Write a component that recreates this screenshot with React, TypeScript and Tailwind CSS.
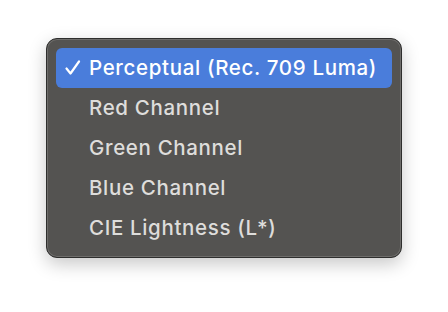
import React from "react";

const items = [
  "Perceptual (Rec. 709 Luma)",
  "Red Channel",
  "Green Channel",
  "Blue Channel",
  "CIE Lightness (L*)",
];

export default function App() {
  return (
    <div className="w-[448px] h-[312px] bg-white pl-[46px] pt-[38px]" style={{ fontFamily: "Inter, 'Noto Sans', sans-serif" }}>
      <div className="w-[356px] h-[220px] rounded-[11px] bg-[#545351] border border-[#2e2e2d] shadow-[0_6px_18px_rgba(0,0,0,0.22),inset_0_0_0_1px_#6e6d6b] p-[9px] flex flex-col">
        {items.map((t, i) => (
          <div
            key={t}
            className={
              i === 0
                ? "h-[40px] rounded-[6px] bg-[#4a7ddb] text-white flex items-center text-[20.5px] font-medium tracking-[0.65px]"
                : "h-[40px] rounded-[6px] text-[#dedddb] flex items-center text-[20.5px] font-medium tracking-[0.65px]"
            }
          >
            <div className="w-[33px] pl-[9px] flex items-center">
              {i === 0 && (
                <svg width="16" height="16" viewBox="0 0 16 16" fill="none">
                  <path d="M1.5 8.5 L5.5 13.5 L14 1.5" stroke="white" strokeWidth="2.2" strokeLinecap="round" strokeLinejoin="round" />
                </svg>
              )}
            </div>
            <span>{t}</span>
          </div>
        ))}
      </div>
    </div>
  );
}
